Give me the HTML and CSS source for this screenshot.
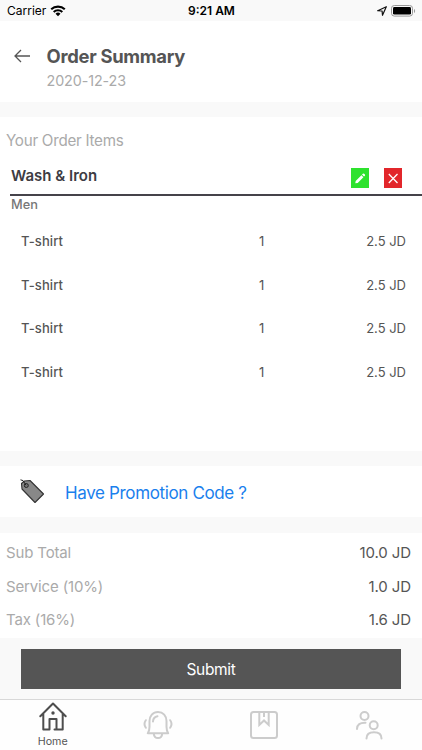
FILE: index.html
```html
<!DOCTYPE html>
<html lang="en">
<head>
<meta charset="utf-8">
<title>Order Summary</title>
<link rel="stylesheet" href="styles.css">
</head>
<body>
<div class="status">
  <div class="status-left"><span class="carrier">Carrier</span>
    <svg class="wifi" width="16" height="12" viewBox="0 0 16 12"><path d="M1.200 4.300C5 .7 11 .7 14.800 4.300M3.700 6.900c2.400-2.300 6.200-2.300 8.600 0" fill="none" stroke="#000" stroke-width="2.100"/><path d="M5.500 8.700a3.600 3.600 0 0 1 5 0L8 11.200z"/></svg>
  </div>
  <span class="time">9:21 AM</span>
  <div class="status-right">
    <svg width="10" height="10" viewBox="0 0 10 10"><path d="M.7 4.700 9.300.7 5.500 9.300 5.100 5z" fill="none" stroke="#111" stroke-width="1.200" stroke-linejoin="round"/></svg>
    <svg width="25" height="12" viewBox="0 0 25 12"><rect x=".5" y=".5" width="21" height="10.600" rx="2.800" fill="none" stroke="#999"/><rect x="2" y="2" width="18" height="7.600" rx="1.400"/><path d="M23 4v4c1.500-.7 1.500-3.300 0-4z" fill="#999"/></svg>
  </div>
</div>
<header class="header">
  <svg class="back" width="17" height="14" viewBox="0 0 17 14"><path d="M16 7H1M7 1 1 7l6 6" fill="none" stroke="#555" stroke-width="1.300"/></svg>
  <div>
    <h1 class="title">Order Summary</h1>
    <div class="date">2020-12-23</div>
  </div>
</header>
<section class="items">
  <h2 class="label">Your Order Items</h2>
  <div class="service">
    <span class="service-name">Wash &amp; Iron</span>
    <div class="actions">
      <svg class="edit" width="18" height="20" viewBox="0 0 18 20"><path d="M4.300 15.300 4.700 12.900 10.400 7.200l2 2-5.700 5.700zM11 6.600l.9-.9q.6-.5 1.200 0l.8.8q.5.600 0 1.200l-.9.900z" fill="#fff"/></svg>
      <svg class="remove" width="18" height="20" viewBox="0 0 18 20"><path d="m4.800 6 8.700 9M13.500 6l-8.700 9" fill="none" stroke="#fff" stroke-width="1.300"/></svg>
    </div>
  </div>
  <div class="group">Men</div>
  <ul class="list">
    <li class="row"><span class="name">T-shirt</span><span class="qty">1</span><span class="price">2.5 JD</span></li>
    <li class="row"><span class="name">T-shirt</span><span class="qty">1</span><span class="price">2.5 JD</span></li>
    <li class="row"><span class="name">T-shirt</span><span class="qty">1</span><span class="price">2.5 JD</span></li>
    <li class="row"><span class="name">T-shirt</span><span class="qty">1</span><span class="price">2.5 JD</span></li>
  </ul>
</section>
<section class="promo">
  <svg width="25" height="25" viewBox="0 0 25 25"><path d="M1.500 4.500 2 10l13 13.500L23.500 15 10 1.500 4.500 2z" fill="#888" stroke="#333" stroke-width="1.100" stroke-linejoin="round"/><circle cx="6.300" cy="6.500" r="2" fill="#777" stroke="#222"/><path d="M.5.800 3 1.600l3 4.600" fill="none" stroke="#222"/></svg>
  <a class="promo-link">Have Promotion Code ?</a>
</section>
<section class="totals">
  <div class="total"><span class="key">Sub Total</span><span class="value">10.0 JD</span></div>
  <div class="total"><span class="key">Service (10%)</span><span class="value">1.0 JD</span></div>
  <div class="total"><span class="key">Tax (16%)</span><span class="value">1.6 JD</span></div>
</section>
<div class="submit-bar"><button class="submit"><span class="submit-text">Submit</span></button></div>
<nav class="tabs">
  <div class="tab active">
    <svg width="28" height="29" viewBox="0 0 28 29"><g fill="none" stroke="#4d4d4d" stroke-width="2" stroke-linejoin="round" stroke-linecap="round"><path d="M1.300 14.300 14 1.500 26.700 14.300M4.300 12v15.600h6.200V17h7v10.600M15.500 27.600h8.200V12"/></g><circle cx="14" cy="11" r="1.700" fill="#4d4d4d"/></svg>
    <span class="tab-label">Home</span>
  </div>
  <div class="tab"><svg width="30" height="30" viewBox="0 0 30 30"><g fill="none" stroke="#ccc" stroke-width="2" stroke-linecap="round" stroke-linejoin="round"><path d="M4.800 23.200h20.400c-1.300-2-1.700-4-1.700-6.400V11c0-5-3.300-9-8.500-9s-8.500 4-8.500 9v5.800c0 2.400-.4 4.400-1.700 6.400zM10.700 23.600c.7 6 7.900 6 8.600 0M10 11.500q.2-4.500 4.500-5.300M2.800 10.200q-2.600 3.800 0 7.600M27.200 10.200q2.600 3.800 0 7.600"/></g></svg></div>
  <div class="tab"><svg width="30" height="30" viewBox="0 0 30 30"><g fill="none" stroke="#ccc" stroke-width="2"><rect x="2" y="2" width="26" height="26" rx="2.500"/><path d="M10.300 2v13l4.700-4.500 4.700 4.500V2M15 2v5"/></g></svg></div>
  <div class="tab"><svg width="30" height="30" viewBox="0 0 30 30"><g fill="none" stroke="#ccc" stroke-width="2" stroke-linecap="round"><circle cx="10.500" cy="6" r="4"/><circle cx="19.700" cy="15.300" r="4"/><path d="M3 19c0-4.500 3-6.500 8.500-6.300M12.500 28.500c0-4.200 2.800-6.200 7.500-6.200s7.500 2 7.500 6.200"/></g></svg></div>
</nav>
</body>
</html>
```
FILE: styles.css
```css
* { box-sizing: border-box; }
body {
  margin: 0;
  width: 422px;
  height: 750px;
  overflow: hidden;
  background: #f9f9f9;
  color: #555;
  font-family: Inter, "Liberation Sans", sans-serif;
}
h1, h2, ul { margin: 0; padding: 0; font-weight: 400; }
svg { display: block; flex: none; }
span, a { white-space: nowrap; }

.status {
  display: grid;
  grid-template-columns: 1fr auto 1fr;
  align-items: center;
  height: 21px;
  padding: 0 6px 0 7px;
  color: #000;
  font-size: 12px;
}
.status-left, .status-right { display: flex; align-items: center; gap: 4px; }
.status-right { justify-content: flex-end; }
.time { font-weight: 600; }

.header {
  display: flex;
  height: 81px;
  padding: 23px 0 0 14px;
  gap: 15.500px;
  background: #fff;
}
.back { margin-top: 5px; }
.title { font-size: 18.400px; line-height: 24px; font-weight: 700; letter-spacing: -0.280px; }
.date { margin-top: 4px; font-size: 14.300px; line-height: 18px; letter-spacing: -0.080px; color: #aaa; }

.items { height: 334px; margin-top: 15px; padding-top: 12px; background: #fff; }
.label { padding-left: 6px; font-size: 15.200px; line-height: 24px; letter-spacing: -0.270px; color: #aaa; }
.service {
  display: flex;
  justify-content: space-between;
  height: 43px;
  margin-left: 10px;
  padding: 13px 20.500px 0 1px;
  border-bottom: 2px solid #45434a;
}
.service-name { font-size: 15px; line-height: 20px; font-weight: 600; color: #3d3c43; }
.actions { display: flex; gap: 15px; padding-top: 2px; }
.edit { background: #2ee22e; }
.remove { background: #e2262b; }
.group { padding-left: 11px; font-size: 12.800px; line-height: 17px; font-weight: 500; color: #777; }
.list { padding-top: 6px; list-style: none; }
.row {
  display: grid;
  grid-template-columns: 238px 1fr auto;
  align-items: center;
  height: 43.800px;
  padding: 0 16px 0 21px;
  font-size: 13px;
}
.name { font-weight: 500; letter-spacing: 0.100px; }

.promo {
  display: flex;
  align-items: center;
  gap: 20px;
  height: 51px;
  margin-top: 15px;
  padding-left: 20px;
  background: #fff;
}
.promo-link { padding-top: 2px; font-size: 17px; letter-spacing: -0.360px; color: #1a80ed; }

.totals { height: 105px; margin-top: 16px; padding-top: 3px; background: #fff; }
.total {
  display: flex;
  justify-content: space-between;
  align-items: center;
  height: 33.500px;
  padding: 0 11px 0 6px;
  font-size: 15px;
}
.key { color: #aaa; letter-spacing: -0.150px; }
.value { letter-spacing: -0.100px; }

.submit-bar { height: 61px; padding: 11px 21px 0; }
.submit {
  display: block;
  width: 100%;
  height: 40px;
  padding: 0;
  border: 0;
  background: #555;
  color: #fff;
  font: 15.500px Inter, "Liberation Sans", sans-serif;
  letter-spacing: -0.300px;
}

.tabs {
  display: grid;
  grid-template-columns: repeat(4, 1fr);
  height: 51px;
  border-top: 1px solid #d8d8d8;
  background: #fefefe;
}
.tab { display: flex; flex-direction: column; align-items: center; padding-top: 10px; }
.active { padding-top: 2px; }
.tab-label { margin-top: 4px; font-size: 10.700px; line-height: 14px; }
```
